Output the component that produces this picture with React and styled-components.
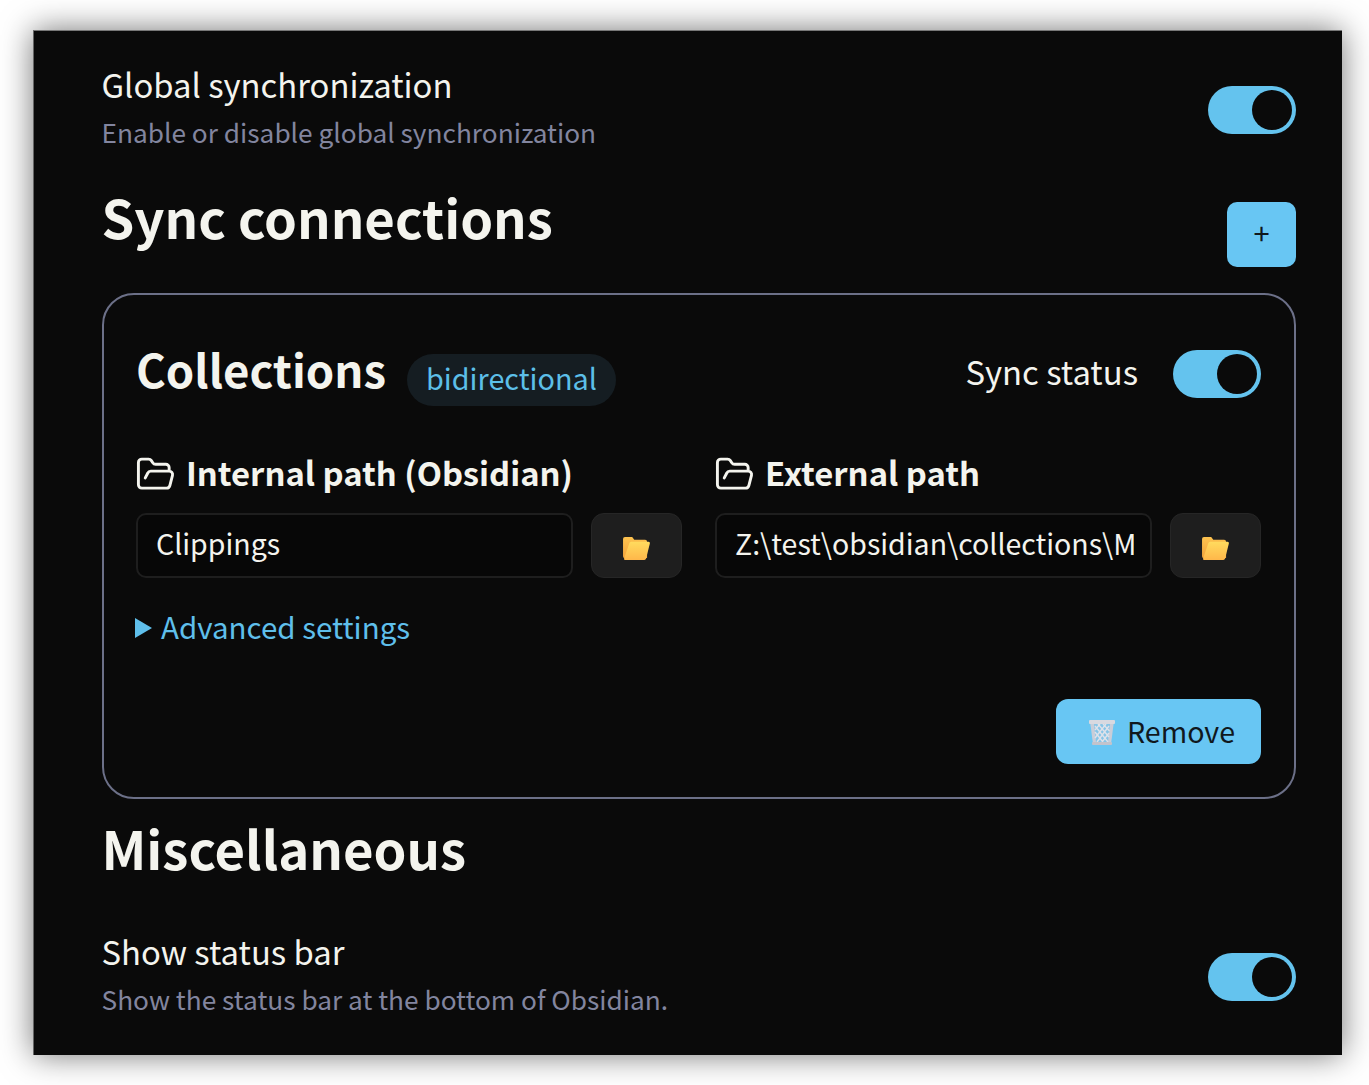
import styled, { createGlobalStyle } from "styled-components";
import { FolderOpen } from "lucide-react";

const GlobalStyle = createGlobalStyle`
  html, body {
    margin: 0;
    background: #fff;
  }
  * {
    box-sizing: border-box;
  }
`;

const Page = styled.div`
  width: 1369px;
  height: 1085px;
  padding: 30px 27px 30px 33px;
  overflow: hidden;
  font-family: "Noto Sans CJK SC", "Noto Sans", sans-serif;
`;

const Window = styled.div`
  height: 1025px;
  padding: 0 46px 0 67.5px;
  background: #0a0a0a;
  border-top: 1px solid #777;
  border-left: 1px solid #666;
  box-shadow: 0 0 30px rgba(0, 0, 0, 0.55);
  color: #f4f4ee;
`;

const SettingRow = styled.div`
  display: flex;
  justify-content: space-between;
  align-items: center;
  padding-top: ${(p) => p.$top}px;
`;

const SettingName = styled.div`
  font-size: 32.8px;
  line-height: 48px;
`;

const SettingDesc = styled.div`
  font-size: 26.25px;
  line-height: 48px;
  color: #82859f;
`;

const Track = styled.div`
  display: flex;
  justify-content: flex-end;
  align-items: center;
  flex: none;
  width: 88px;
  height: 48px;
  margin-top: ${(p) => p.$shift || 0}px;
  padding-right: 4px;
  border-radius: 24px;
  background: #64c3ee;
`;

const Thumb = styled.div`
  width: 40px;
  height: 40px;
  border-radius: 50%;
  background: #0a0a0a;
`;

const SectionHead = styled.div`
  display: flex;
  justify-content: space-between;
  align-items: flex-start;
  margin-top: ${(p) => p.$top}px;
`;

const SectionTitle = styled.h2`
  margin: 0;
  font-size: 52.6px;
  line-height: 70px;
  font-weight: 700;
`;

const AddButton = styled.button`
  width: 69px;
  height: 65px;
  margin-top: 21px;
  border: 0;
  border-radius: 10px;
  background: #68c6f3;
  color: #10181d;
  font: 400 29px "Noto Sans CJK SC", sans-serif;
  padding: 0 0 6px;
`;

const Card = styled.div`
  height: 506px;
  margin-top: 26px;
  padding: 54px 33px 0 32.5px;
  border: 2px solid #6c7088;
  border-radius: 32px;
`;

const CardHead = styled.div`
  display: flex;
  align-items: center;
  height: 50px;
`;

const CardTitle = styled.h3`
  margin: 0;
  padding-bottom: 12px;
  font-size: 45.5px;
  line-height: 50px;
  font-weight: 700;
`;

const Badge = styled.span`
  margin: 12px 0 0 21px;
  padding: 0 19px;
  height: 52px;
  line-height: 48px;
  border-radius: 26px;
  background: #151d22;
  color: #5cbfe8;
  font-size: 28.8px;
`;

const StatusLabel = styled.span`
  margin-left: auto;
  margin-right: 35px;
  padding-bottom: 8px;
  font-size: 32.8px;
`;

const Fields = styled.div`
  display: grid;
  grid-template-columns: 546px 546px;
  gap: 33px;
  margin-top: 47px;
`;

const FieldLabel = styled.div`
  display: flex;
  align-items: center;
  gap: 10px;
  height: 50px;
  font-size: 32.8px;
  font-weight: 700;

  svg {
    margin: 6px 0 0 -1px;
  }
`;

const PathRow = styled.div`
  display: flex;
  justify-content: space-between;
  margin-top: 17px;
`;

const PathInput = styled.input`
  width: 437px;
  height: 65px;
  padding: 0 16px 6px 18px;
  border: 2px solid #1e1e1e;
  border-radius: 10px;
  outline: 0;
  background: #070707;
  color: #f4f4ee;
  font: 400 28.5px "Noto Sans CJK SC", sans-serif;
`;

const BrowseButton = styled.button`
  display: flex;
  justify-content: center;
  align-items: center;
  width: 91px;
  height: 65px;
  padding: 6px 0 0;
  border: 1px solid #262626;
  border-radius: 13px;
  background: #1e1e1e;
`;

const Advanced = styled.div`
  display: flex;
  align-items: center;
  gap: 9px;
  margin-top: 23px;
  height: 50px;
  color: #5fbfeb;
  font-size: 29.5px;
`;

const Arrow = styled.span`
  margin: 4px 0 0 -1px;
  width: 0;
  height: 0;
  border-left: 17px solid #5fbfeb;
  border-top: 10px solid transparent;
  border-bottom: 10px solid transparent;
`;

const CardFooter = styled.div`
  display: flex;
  justify-content: flex-end;
  margin-top: 48px;
`;

const RemoveButton = styled.button`
  display: flex;
  align-items: center;
  gap: 11px;
  height: 65px;
  width: 205px;
  padding: 0 0 2px 32px;
  border: 0;
  border-radius: 12px;
  background: #68c6f3;
  color: #10181d;
  font: 400 28.6px "Noto Sans CJK SC", sans-serif;

  svg {
    margin-top: 2px;
  }
`;

const FolderEmoji = () => (
  <svg width="29" height="25" viewBox="0 0 30 26">
    <defs>
      <linearGradient id="fold-back" x1="0" y1="0" x2="0" y2="1">
        <stop offset="0" stopColor="#fdc34f" />
        <stop offset="1" stopColor="#f2a33c" />
      </linearGradient>
      <linearGradient id="fold-front" x1="0" y1="0" x2="0" y2="1">
        <stop offset="0" stopColor="#ffdb5e" />
        <stop offset="1" stopColor="#ffb74a" />
      </linearGradient>
    </defs>
    <path d="M1 3a2 2 0 0 1 2-2h6.5c1 0 1.6.5 2.2 1.5l1 1.5H24a2 2 0 0 1 2 2v17H3a2 2 0 0 1-2-2z" fill="url(#fold-back)" />
    <path d="M7.5 7.5A2 2 0 0 1 9.4 6H27.5c1 0 1.6.8 1.4 1.8L25 23.5a2 2 0 0 1-2 1.5H3.5c-1.2 0-1.6-.8-1.4-1.6z" fill="url(#fold-front)" />
  </svg>
);

const TrashEmoji = () => (
  <svg width="28" height="28" viewBox="0 0 28 28">
    <path d="M2 3h24l-3 23H5z" fill="#c9cdd8" />
    <path d="M6 6h16l-2 18H8z" fill="#86c4e6" />
    <path d="M7 8l13 16M10 6l11 13M15 6l6.500 7M7 14l8 10M21 8L9 24M18 6L7 20M12 6l-5 6M21 15l-7 9" stroke="#dfe2ea" strokeWidth="1.4" fill="none" />
    <rect x="1" y="2" width="26" height="4" rx="1" fill="#d8d9e0" />
    <rect x="4" y="24" width="20" height="3" rx="1" fill="#c2c3cc" />
  </svg>
);

const Toggle = ({ shift }) => (
  <Track $shift={shift}>
    <Thumb />
  </Track>
);

const PathField = ({ label, value }) => (
  <div>
    <FieldLabel>
      <FolderOpen size={41} strokeWidth={1.7} />
      {label}
    </FieldLabel>
    <PathRow>
      <PathInput readOnly value={value} />
      <BrowseButton>
        <FolderEmoji />
      </BrowseButton>
    </PathRow>
  </div>
);

const App = () => {
  return (
    <Page>
      <GlobalStyle />
      <Window>
        <SettingRow $top={29}>
          <div>
            <SettingName>Global synchronization</SettingName>
            <SettingDesc>Enable or disable global synchronization</SettingDesc>
          </div>
          <Toggle shift={4} />
        </SettingRow>
        <SectionHead $top={25}>
          <SectionTitle>Sync connections</SectionTitle>
          <AddButton>+</AddButton>
        </SectionHead>
        <Card>
          <CardHead>
            <CardTitle>Collections</CardTitle>
            <Badge>bidirectional</Badge>
            <StatusLabel>Sync status</StatusLabel>
            <Toggle />
          </CardHead>
          <Fields>
            <PathField label="Internal path (Obsidian)" value="Clippings" />
            <PathField label="External path" value="Z:\test\obsidian\collections\MyClippings" />
          </Fields>
          <Advanced>
            <Arrow />
            Advanced settings
          </Advanced>
          <CardFooter>
            <RemoveButton>
              <TrashEmoji />
              Remove
            </RemoveButton>
          </CardFooter>
        </Card>
        <SectionHead $top={13}>
          <SectionTitle>Miscellaneous</SectionTitle>
        </SectionHead>
        <SettingRow $top={45}>
          <div>
            <SettingName>Show status bar</SettingName>
            <SettingDesc>Show the status bar at the bottom of Obsidian.</SettingDesc>
          </div>
          <Toggle shift={4} />
        </SettingRow>
      </Window>
    </Page>
  );
};

export default App;
